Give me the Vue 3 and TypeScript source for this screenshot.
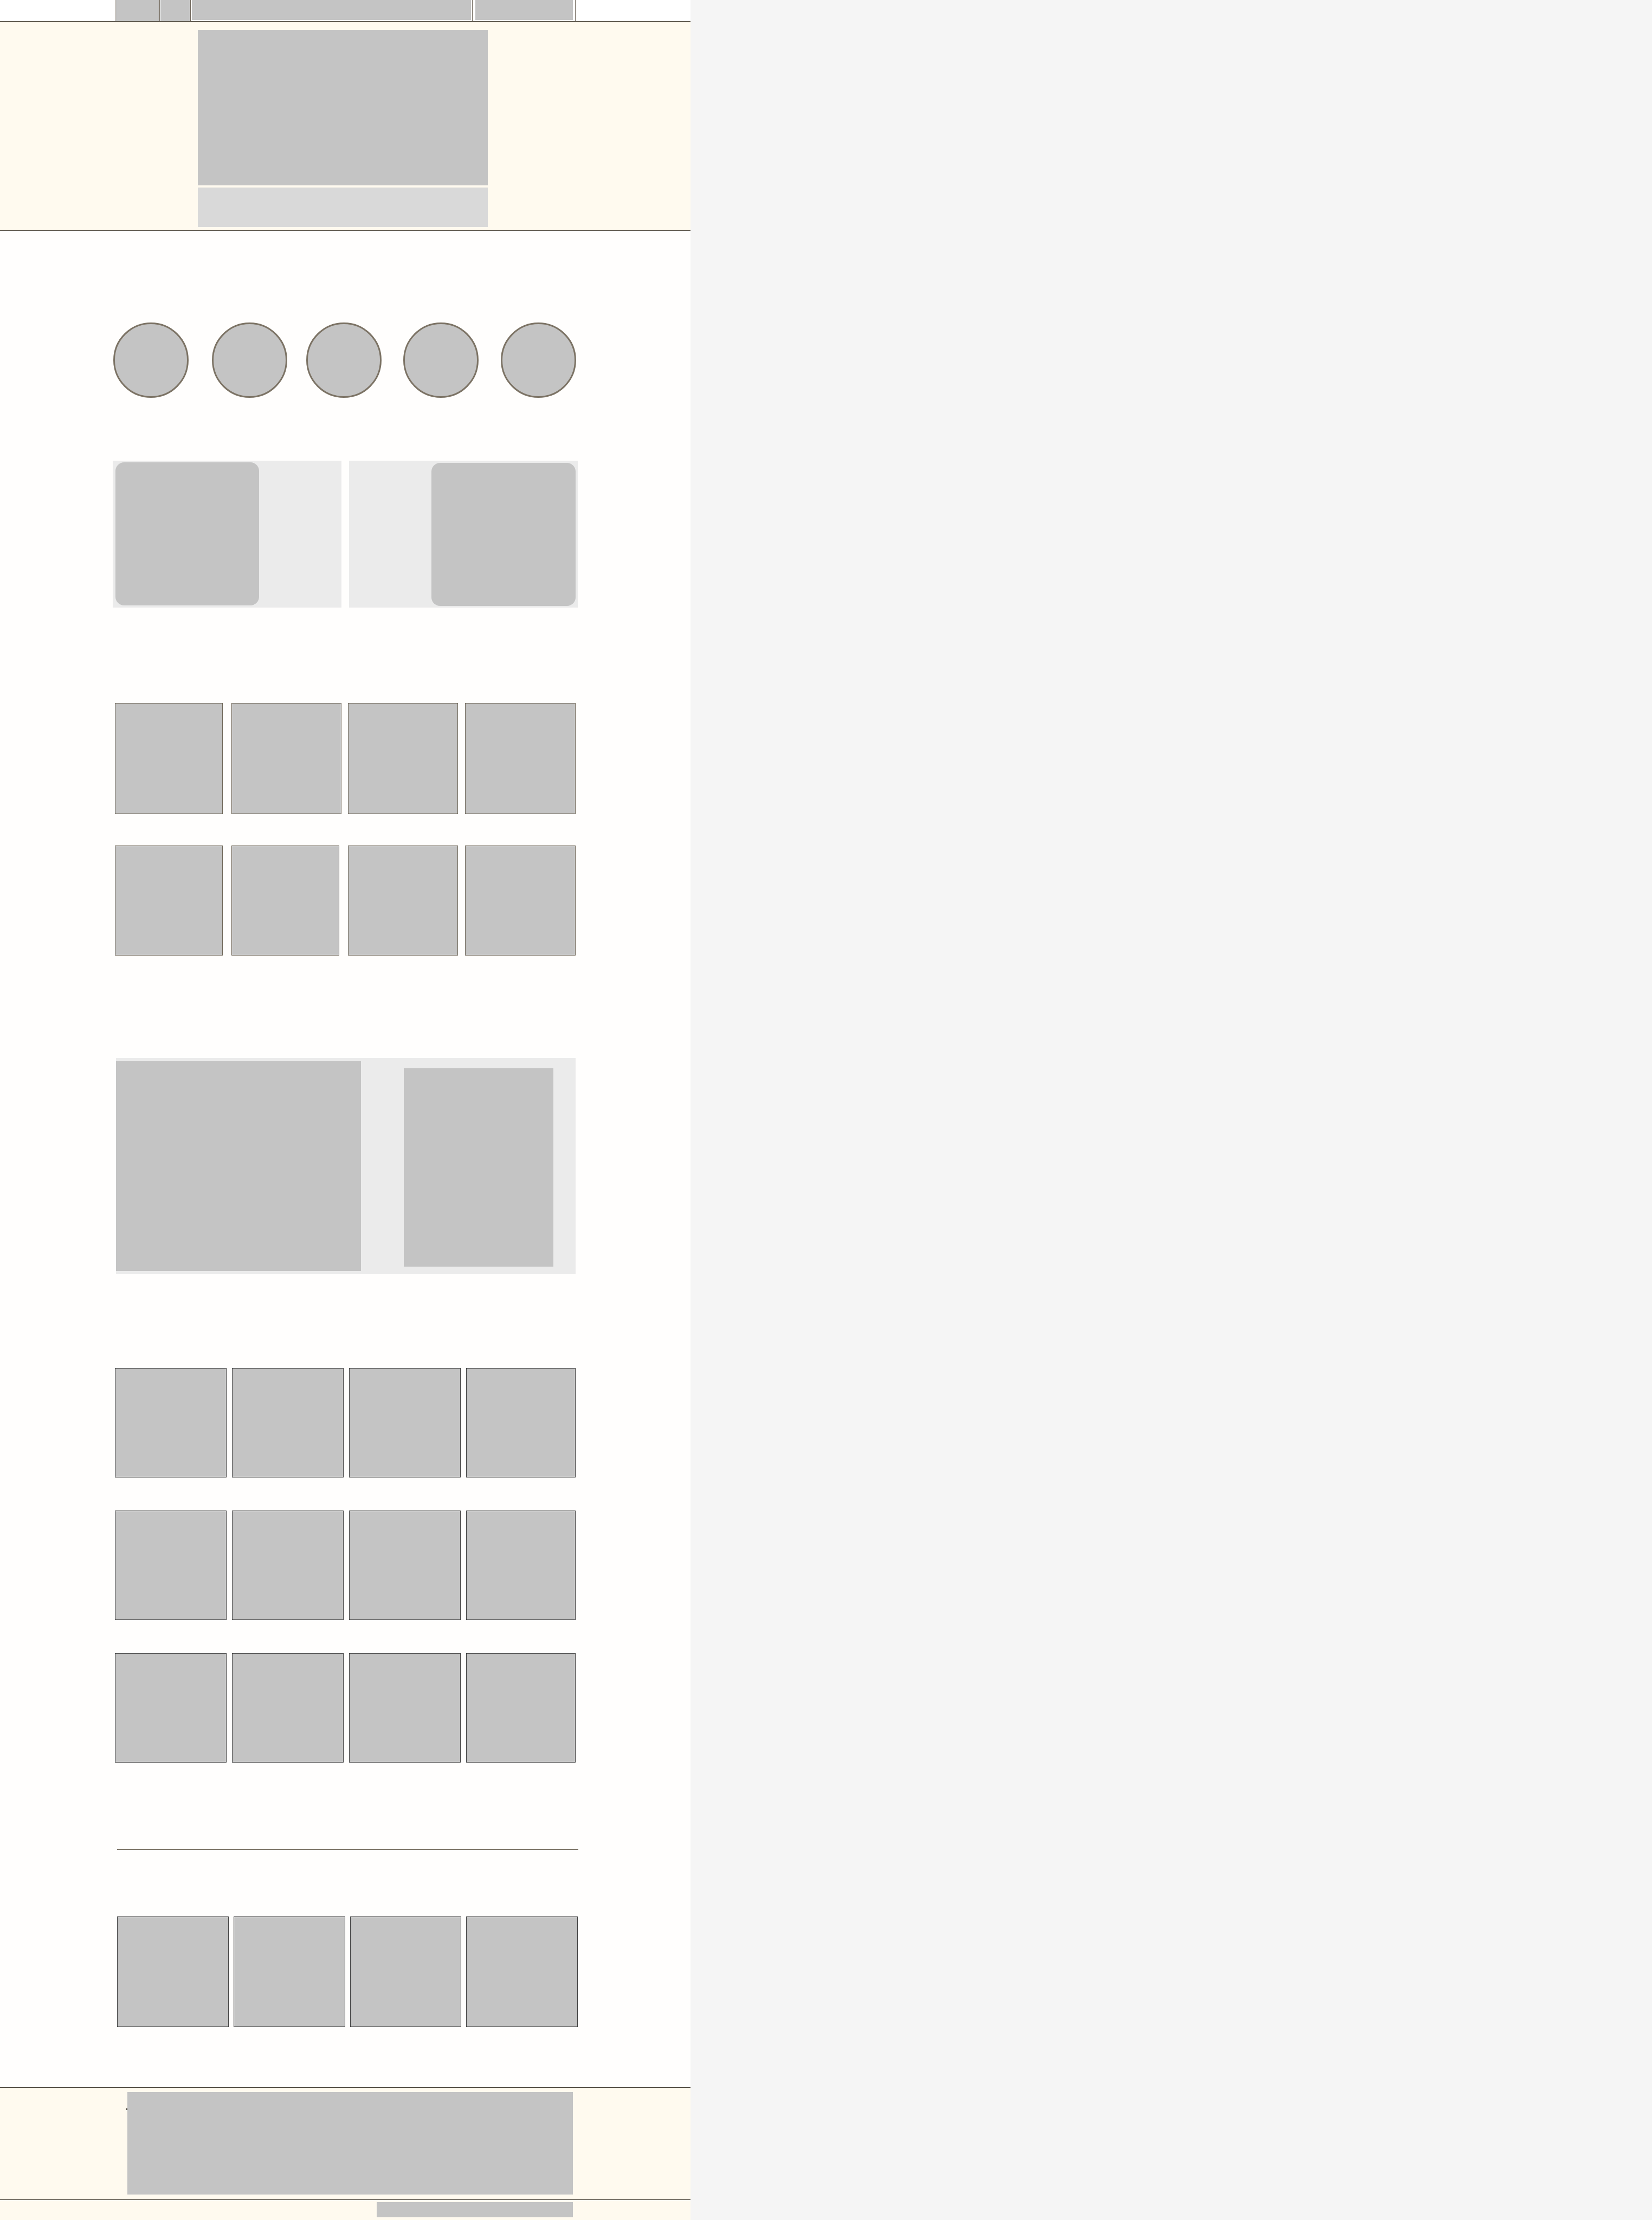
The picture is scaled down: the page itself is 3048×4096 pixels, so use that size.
<script setup lang="ts">
type Tile = { id: number; size: string }

const circles: number[] = [1, 2, 3, 4, 5]

const picks: Tile[] = [
  { id: 1, size: 'narrow' },
  { id: 2, size: 'wide' },
  { id: 3, size: 'wide' },
  { id: 4, size: 'full' },
  { id: 5, size: 'narrow short' },
  { id: 6, size: 'narrow short' },
  { id: 7, size: 'wide short' },
  { id: 8, size: 'full short' },
]

const products: number[] = Array.from({ length: 12 }, (_, i) => i + 1)
const recent: number[] = [1, 2, 3, 4]
</script>

<template>
  <div class="page">
    <header class="topbar">
      <div class="topbar-inner">
        <div class="cell logo"><div class="block"></div></div>
        <div class="cell menu"><div class="block"></div></div>
        <div class="cell search"><div class="block"></div></div>
        <div class="cell account"><div class="block"></div></div>
      </div>
    </header>

    <section class="hero">
      <div class="block hero-image"></div>
      <div class="hero-caption"></div>
    </section>

    <main>
      <section class="circles">
        <div v-for="c in circles" :key="c" class="circle"></div>
      </section>

      <section class="promos">
        <article class="promo"><div class="block promo-image"></div></article>
        <article class="promo promo-end"><div class="block promo-image"></div></article>
      </section>

      <section class="picks">
        <div v-for="t in picks" :key="t.id" class="block pick" :class="t.size"></div>
      </section>

      <section class="feature">
        <div class="block feature-image"></div>
        <div class="block feature-text"></div>
      </section>

      <section class="products">
        <div v-for="p in products" :key="p" class="block product"></div>
      </section>

      <hr class="divider" />

      <section class="recent">
        <div v-for="r in recent" :key="r" class="block product"></div>
      </section>
    </main>

    <footer class="footer">
      <div class="footer-main">
        <span class="mark"></span>
        <div class="block footer-links"></div>
      </div>
      <div class="footer-legal">
        <div class="block legal-text"></div>
      </div>
    </footer>
  </div>
</template>

<style>
body {
  margin: 0;
  background: #f5f5f5;
}
</style>

<style scoped>
.page,
.page * {
  box-sizing: border-box;
}

.page {
  width: 100%;
  max-width: 1274px;
  background: #fffefd;
}

.block {
  background: #c4c4c4;
}

/* Top bar */
.topbar {
  height: 40px;
  padding: 0 212px;
  background: #fff;
  border-bottom: 1px solid #464036;
}

.topbar-inner {
  display: grid;
  grid-template-columns: 82fr 57fr 520fr 190fr;
  height: 39px;
  border-right: 1px solid #70675b;
}

.cell {
  border-left: 1px solid #70675b;
}

.logo {
  padding: 0 1px;
}

.menu {
  padding: 0 1px;
}

.search {
  padding: 0 2px 2px;
}

.account {
  padding: 0 4px 2px 5px;
}

.cell .block {
  height: 100%;
}

/* Hero */
.hero {
  display: flex;
  flex-direction: column;
  gap: 4px;
  padding: 15px 374px 6px 365px;
  background: #fffaef;
  border-bottom: 1px solid #464036;
}

.hero-image {
  height: 287px;
}

.hero-caption {
  height: 73px;
  background: #d9d9d9;
}

/* Round categories */
.circles {
  display: grid;
  grid-template-columns: 182fr 174fr 179fr 180fr 139px;
  margin: 169px 211px 0 209px;
}

.circle {
  width: 139px;
  height: 139px;
  border: 3px solid #7c7365;
  border-radius: 50%;
  background: #c4c4c4;
}

/* Promo pair */
.promos {
  display: grid;
  grid-template-columns: 1fr 1fr;
  gap: 14px;
  margin: 116px 208px 0;
}

.promo {
  display: flex;
  height: 271px;
  padding: 3px 4px 4px 5px;
  background: #ebebeb;
}

.promo-end {
  justify-content: flex-end;
  padding-top: 4px;
  padding-bottom: 3px;
}

.promo-image {
  width: 265px;
  border-radius: 16px;
}

.promo-end .promo-image {
  width: 266px;
}

/* Picks */
.picks {
  display: grid;
  grid-template-columns: 215fr 215fr 216fr 204fr;
  row-gap: 58px;
  margin: 176px 212px 0;
}

.pick {
  height: 205px;
  border: 1px solid #6e6658;
}

.pick.short {
  height: 203px;
}

.narrow {
  width: 199px;
}

.wide {
  width: 203px;
}

.full {
  width: 100%;
}

/* Feature */
.feature {
  display: flex;
  justify-content: space-between;
  align-items: flex-start;
  height: 399px;
  margin: 189px 212px 0 214px;
  padding: 6px 41px 6px 0;
  background: #ebebeb;
}

.feature-image {
  width: 452px;
  height: 387px;
}

.feature-text {
  width: 276px;
  height: 366px;
  margin-top: 13px;
}

/* Product grids */
.products {
  display: grid;
  grid-template-columns: 206fr 206fr 206fr 202fr;
  gap: 61px 10px;
  margin: 173px 212px 0;
}

.product {
  height: 202px;
  border: 1px solid #404040;
}

.divider {
  height: 1px;
  margin: 160px 207px 0 216px;
  border: 0;
  background: #6e6658;
}

.recent {
  display: grid;
  grid-template-columns: repeat(4, 1fr);
  gap: 9px;
  margin: 123px 208px 0 216px;
}

.recent .product {
  height: 204px;
}

/* Footer */
.footer {
  margin-top: 111px;
  background: #fffaef;
  border-top: 1px solid #464036;
}

.footer-main {
  position: relative;
  padding: 8px 217px 9px 235px;
  border-bottom: 1px solid #464036;
}

.footer-links {
  height: 189px;
}

.mark {
  position: absolute;
  top: 38px;
  left: 233px;
  width: 2px;
  height: 3px;
  background: #534c42;
}

.footer-legal {
  display: flex;
  justify-content: flex-end;
  padding: 4px 217px 5px 0;
}

.legal-text {
  width: 362px;
  height: 28px;
}
</style>
